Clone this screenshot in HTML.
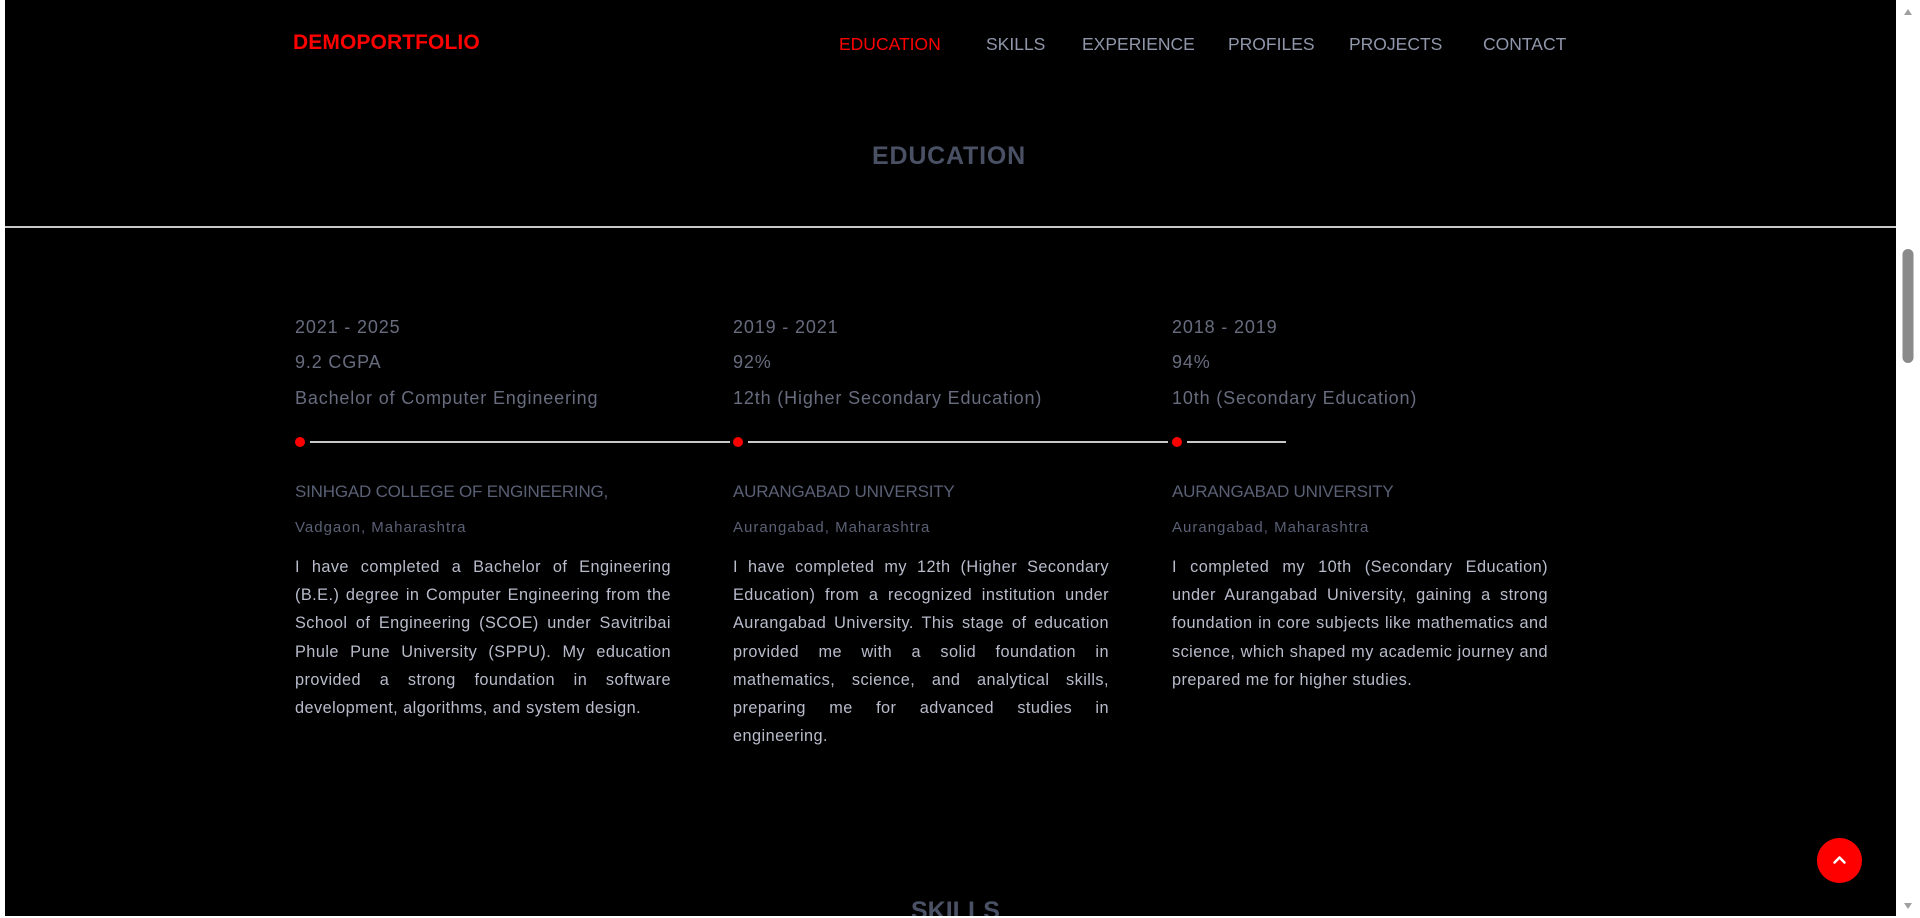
<!DOCTYPE html>
<html><head><meta charset="utf-8">
<style>
*{margin:0;padding:0;box-sizing:border-box}
html,body{width:1920px;height:918px;overflow:hidden;background:#fff;font-family:"Liberation Sans",sans-serif}
#main{position:absolute;left:5px;top:0;width:1891px;height:916px;background:#000;overflow:hidden}
.abs{position:absolute;white-space:nowrap}
.logo{left:288px;top:31px;color:#f00;font-weight:bold;font-size:21px;letter-spacing:0.1px}
.nav{top:34px;font-size:17.5px;color:#9097ab;letter-spacing:0px}
.h{font-weight:bold;font-size:25px;color:#4a5165;letter-spacing:0.8px}
.hr{left:0;top:226px;width:1891px;height:2px;background:#c8c8c8}
.l1{position:absolute;font-size:18px;color:#676c7e;white-space:nowrap;letter-spacing:0.85px}
.inst{position:absolute;font-size:17px;color:#5a6075;white-space:nowrap;letter-spacing:-0.2px}
.loc{position:absolute;font-size:15px;color:#5a6075;white-space:nowrap;letter-spacing:1px}
.p{position:absolute;top:553px;width:376px;font-size:16.3px;line-height:28.2px;color:#b8bccb;text-align:justify;letter-spacing:0.45px}
.dot{position:absolute;top:437px;width:10px;height:10px;border-radius:50%;background:#f00}
.line{position:absolute;top:441px;height:2px;background:#c8c8c8}
.btn{left:1812px;top:838px;width:45px;height:45px;border-radius:50%;background:#f00}
</style></head><body>
<div id="main">
<div class="abs logo">DEMOPORTFOLIO</div>
<div class="abs nav" style="left:834px;color:#f00">EDUCATION</div>
<div class="abs nav" style="left:981px">SKILLS</div>
<div class="abs nav" style="left:1077px">EXPERIENCE</div>
<div class="abs nav" style="left:1223px">PROFILES</div>
<div class="abs nav" style="left:1344px">PROJECTS</div>
<div class="abs nav" style="left:1478px">CONTACT</div>
<div class="abs h" style="left:867px;top:142px">EDUCATION</div>
<div class="abs hr"></div>

<div class="l1" style="left:290px;top:317px">2021 - 2025</div>
<div class="l1" style="left:290px;top:352px">9.2 CGPA</div>
<div class="l1" style="left:290px;top:388px">Bachelor of Computer Engineering</div>
<div class="l1" style="left:728px;top:317px">2019 - 2021</div>
<div class="l1" style="left:728px;top:352px">92%</div>
<div class="l1" style="left:728px;top:388px">12th (Higher Secondary Education)</div>
<div class="l1" style="left:1167px;top:317px">2018 - 2019</div>
<div class="l1" style="left:1167px;top:352px">94%</div>
<div class="l1" style="left:1167px;top:388px">10th (Secondary Education)</div>

<div class="dot" style="left:290px"></div><div class="line" style="left:305px;width:420px"></div>
<div class="dot" style="left:728px"></div><div class="line" style="left:743px;width:420px"></div>
<div class="dot" style="left:1167px"></div><div class="line" style="left:1182px;width:99px"></div>

<div class="inst" style="left:290px;top:482px">SINHGAD COLLEGE OF ENGINEERING,</div>
<div class="inst" style="left:728px;top:482px">AURANGABAD UNIVERSITY</div>
<div class="inst" style="left:1167px;top:482px">AURANGABAD UNIVERSITY</div>
<div class="loc" style="left:290px;top:519px">Vadgaon, Maharashtra</div>
<div class="loc" style="left:728px;top:519px">Aurangabad, Maharashtra</div>
<div class="loc" style="left:1167px;top:519px">Aurangabad, Maharashtra</div>

<div class="p" style="left:290px">I have completed a Bachelor of Engineering (B.E.) degree in Computer Engineering from the School of Engineering (SCOE) under Savitribai Phule Pune University (SPPU). My education provided a strong foundation in software development, algorithms, and system design.</div>
<div class="p" style="left:728px">I have completed my 12th (Higher Secondary Education) from a recognized institution under Aurangabad University. This stage of education provided me with a solid foundation in mathematics, science, and analytical skills, preparing me for advanced studies in engineering.</div>
<div class="p" style="left:1167px">I completed my 10th (Secondary Education) under Aurangabad University, gaining a strong foundation in core subjects like mathematics and science, which shaped my academic journey and prepared me for higher studies.</div>

<div class="abs btn"><svg width="45" height="45" viewBox="0 0 45 45"><path d="M17.5 24.5 L22.5 19.5 L27.5 24.5" stroke="#fff" stroke-width="2.5" fill="none" stroke-linecap="round" stroke-linejoin="round"/></svg></div>
<div class="abs h" style="left:906px;top:897px;letter-spacing:0">SKILLS</div>
</div>
<div style="position:absolute;left:1896px;top:0;width:24px;height:918px;background:#fff">
<svg width="24" height="918" style="position:absolute;left:0;top:0"><path d="M8 15 L12 9 L16 15 Z" fill="#a0a0a0"/><path d="M8 903 L12 909 L16 903 Z" fill="#a0a0a0"/><rect x="6.5" y="249" width="11" height="114" rx="5.5" fill="#8a8a8a"/></svg>
</div>
</body></html>
